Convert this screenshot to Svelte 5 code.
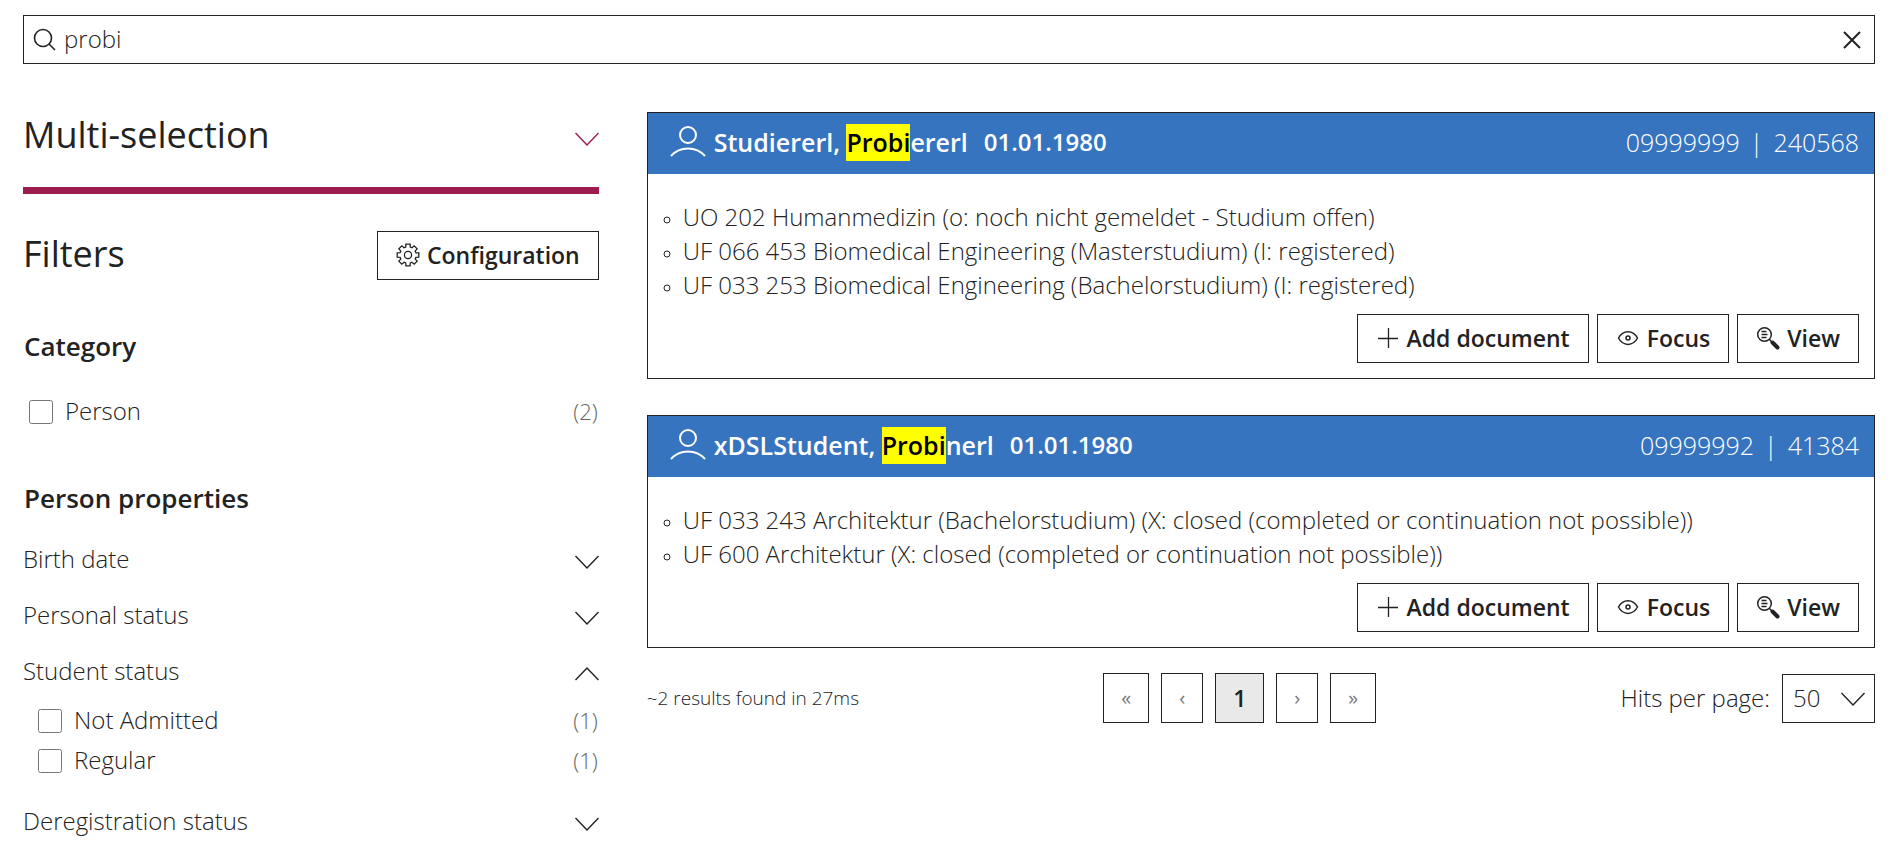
<script lang="ts">
	let query = 'probi';
	let hitsPerPage = 50;
	let personChecked = false;

	let facets = [
		{ label: 'Birth date', open: false, values: [] },
		{ label: 'Personal status', open: false, values: [] },
		{
			label: 'Student status',
			open: true,
			values: [
				{ label: 'Not Admitted', count: 1, checked: false },
				{ label: 'Regular', count: 1, checked: false }
			]
		},
		{ label: 'Deregistration status', open: false, values: [] }
	];

	const hits = [
		{
			familyName: 'Studiererl',
			match: 'Probi',
			rest: 'ererl',
			birthDate: '01.01.1980',
			ids: ['09999999', '240568'],
			studies: [
				'UO 202 Humanmedizin (o: noch nicht gemeldet - Studium offen)',
				'UF 066 453 Biomedical Engineering (Masterstudium) (I: registered)',
				'UF 033 253 Biomedical Engineering (Bachelorstudium) (I: registered)'
			]
		},
		{
			familyName: 'xDSLStudent',
			match: 'Probi',
			rest: 'nerl',
			birthDate: '01.01.1980',
			ids: ['09999992', '41384'],
			studies: [
				'UF 033 243 Architektur (Bachelorstudium) (X: closed (completed or continuation not possible))',
				'UF 600 Architektur (X: closed (completed or continuation not possible))'
			]
		}
	];

	// outline of the gear: [degrees from the tooth's middle, radius] for each corner
	const corners = [[-16, 8.2], [-11, 11], [11, 11], [16, 8.2]];
	const gear = [0, 45, 90, 135, 180, 225, 270, 315].flatMap((tooth) =>
		corners.map(([offset, radius]) => {
			const angle = ((tooth + offset) * Math.PI) / 180;
			return `${(12 + radius * Math.cos(angle)).toFixed(2)},${(12 + radius * Math.sin(angle)).toFixed(2)}`;
		})
	).join(' ');
</script>

<div class="search">
	<form class="search-box" on:submit|preventDefault>
		<svg class="search-icon" viewBox="0 0 24 24" aria-hidden="true">
			<circle cx="10" cy="10" r="8.5" />
			<path d="M16 16 L22 22" />
		</svg>
		<input type="text" aria-label="Search" bind:value={query} />
		<button type="reset" class="clear" aria-label="Clear" on:click={() => (query = '')}>
			<svg viewBox="0 0 18 18" aria-hidden="true"><path d="M1 1 L17 17 M17 1 L1 17" /></svg>
		</button>
	</form>

	<div class="columns">
		<aside>
			<div class="multi-selection">
				<h2>Multi-selection</h2>
				<button class="toggle accent" aria-label="Toggle multi-selection">
					<svg class="chevron" viewBox="0 0 24 14"><path d="M0.5 1 L12 13 L23.5 1" /></svg>
				</button>
			</div>

			<div class="filters-head">
				<h2>Filters</h2>
				<button class="button">
					<svg class="icon" viewBox="0 0 24 24" aria-hidden="true">
						<polygon points={gear} />
						<circle cx="12" cy="12" r="3.6" />
					</svg>
					Configuration
				</button>
			</div>

			<h3>Category</h3>
			<label class="option">
				<input type="checkbox" bind:checked={personChecked} />
				<span>Person</span>
				<span class="count">(2)</span>
			</label>

			<h3 class="properties">Person properties</h3>
			{#each facets as facet}
				<button class="facet" aria-expanded={facet.open} on:click={() => (facet.open = !facet.open)}>
					{facet.label}
					<svg class="chevron" class:up={facet.open} viewBox="0 0 24 14" aria-hidden="true">
						<path d="M0.5 1 L12 13 L23.5 1" />
					</svg>
				</button>
				{#if facet.open}
					<div class="facet-values">
						{#each facet.values as value}
							<label class="option">
								<input type="checkbox" bind:checked={value.checked} />
								<span>{value.label}</span>
								<span class="count">({value.count})</span>
							</label>
						{/each}
					</div>
				{/if}
			{/each}
		</aside>

		<main>
			{#each hits as hit}
				<article>
					<header>
						<svg class="person" viewBox="0 0 36 32" aria-hidden="true">
							<circle cx="18" cy="9" r="8" />
							<path d="M1 30 C10 20 26 20 35 30" />
						</svg>
						<span class="name">{hit.familyName}, <mark>{hit.match}</mark>{hit.rest}</span>
						<span class="birth-date">{hit.birthDate}</span>
						<span class="ids">
							<span>{hit.ids[0]}</span>
							<span>|</span>
							<span>{hit.ids[1]}</span>
						</span>
					</header>
					<ul>
						{#each hit.studies as study}
							<li>{study}</li>
						{/each}
					</ul>
					<div class="actions">
						<button class="button">
							<svg class="icon" viewBox="0 0 24 24" aria-hidden="true">
								<path d="M12.5 2 V22 M2 12.5 H22" />
							</svg>
							Add document
						</button>
						<button class="button">
							<svg class="icon eye" viewBox="0 0 24 24" aria-hidden="true">
								<path d="M2.5 12 C7 3.5 17 3.5 21.5 12 C17 20.5 7 20.5 2.5 12 Z" />
								<circle cx="12" cy="12" r="2" />
							</svg>
							Focus
						</button>
						<button class="button">
							<svg class="icon view" viewBox="0 0 24 24" aria-hidden="true">
								<circle cx="8.5" cy="8.5" r="6.8" />
								<path d="M5.5 5.5 H10.5 M5.5 8.5 H11.5 M5.5 11.5 H10.5 M13.5 13.5 L16 16" />
								<path class="handle" d="M16.5 16.5 L21.5 21.5" />
							</svg>
							View
						</button>
					</div>
				</article>
			{/each}

			<footer>
				<span class="stats">~2 results found in 27ms</span>
				<nav aria-label="Pages">
					<button class="page" disabled>«</button>
					<button class="page" disabled>‹</button>
					<button class="page current">1</button>
					<button class="page" disabled>›</button>
					<button class="page" disabled>»</button>
				</nav>
				<label class="per-page">
					Hits per page:
					<span class="select">
						<select bind:value={hitsPerPage}>
							<option value={25}>25</option>
							<option value={50}>50</option>
							<option value={100}>100</option>
						</select>
						<svg class="chevron" viewBox="0 0 24 14" aria-hidden="true">
							<path d="M0.5 1 L12 13 L23.5 1" />
						</svg>
					</span>
				</label>
			</footer>
		</main>
	</div>
</div>

<style>
	:global(body) {
		margin: 0;
		background: #fff;
	}
	.search {
		padding: 15px 22px 0 23px;
		font: 300 24px/34px 'Open Sans', sans-serif;
		color: #222;
	}
	button, input, select {
		font: inherit;
		color: inherit;
	}
	button {
		cursor: pointer;
	}
	svg {
		flex: none;
		fill: none;
		stroke: currentColor;
	}

	/* Search box */
	.search-box {
		display: flex;
		align-items: center;
		box-sizing: border-box;
		height: 49px;
		padding: 0 11px 0 9px;
		border: 1px solid #222;
	}
	.search-box input {
		flex: 1;
		min-width: 0;
		padding: 0 0 2px 7px;
		border: none;
		outline: none;
		background: none;
	}
	.search-icon {
		width: 24px;
		height: 24px;
		stroke-width: 1.6;
	}
	.clear {
		display: flex;
		padding: 2px;
		border: none;
		background: none;
	}
	.clear svg {
		width: 18px;
		height: 18px;
		stroke-width: 2;
	}

	.columns {
		display: grid;
		grid-template-columns: minmax(0, 15fr) minmax(0, 32fr);
		gap: 48px;
		align-items: start;
		padding-top: 48px;
	}

	/* Filters */
	h2, h3 {
		margin: 0;
	}
	h2 {
		font-size: 36px;
		line-height: 46px;
		font-weight: 400;
	}
	h3 {
		padding: 0 1px;
		font-size: 26px;
		line-height: 36px;
		font-weight: 600;
	}
	.multi-selection {
		display: flex;
		align-items: center;
		justify-content: space-between;
		padding-bottom: 29px;
		border-bottom: 7px solid #9c1c4d;
	}
	.toggle {
		display: flex;
		padding: 8px 0 0;
		border: none;
		background: none;
	}
	.accent {
		color: #9c1c4d;
	}
	.chevron {
		width: 24px;
		height: 14px;
		stroke-width: 1.4;
	}
	.up {
		transform: rotate(180deg);
	}
	.filters-head {
		display: flex;
		align-items: flex-start;
		justify-content: space-between;
		padding: 37px 0 48px;
	}
	.option {
		display: flex;
		align-items: center;
		padding-left: 6px;
		line-height: 38px;
	}
	.option input {
		flex: none;
		width: 24px;
		height: 24px;
		margin: 0 12px 0 0;
	}
	.option span {
		padding-bottom: 2px;
	}
	.option .count {
		margin-left: auto;
		padding-right: 1px;
		font-size: 22px;
		color: #666;
	}
	h3 + .option {
		padding-top: 28px;
	}
	.properties {
		padding-top: 48px;
		padding-bottom: 17px;
	}
	.facet {
		display: flex;
		align-items: center;
		justify-content: space-between;
		box-sizing: border-box;
		width: 100%;
		height: 56px;
		padding: 0 0 4px;
		border: none;
		background: none;
		text-align: left;
	}
	.facet .chevron {
		margin-top: 5px;
	}
	.facet-values {
		padding: 0 0 14px 9px;
	}

	.button {
		display: flex;
		align-items: center;
		gap: 7px;
		box-sizing: border-box;
		height: 49px;
		padding: 0 18px 2px;
		border: 1px solid #222;
		background: #fff;
		font-size: 23px;
		font-weight: 600;
	}
	.icon {
		width: 24px;
		height: 24px;
		stroke-width: 1.3;
	}
	.eye, .view {
		stroke-width: 1.5;
	}
	.handle {
		stroke-width: 4;
		stroke-linecap: round;
	}

	/* Hits */
	article {
		margin-bottom: 36px;
		border: 1px solid #222;
	}
	article:last-of-type {
		margin-bottom: 25px;
	}
	header {
		display: flex;
		align-items: center;
		box-sizing: border-box;
		height: 61px;
		padding: 0 15px 3px 22px;
		background: #3774c0;
		color: #fff;
	}
	.person {
		width: 36px;
		height: 32px;
		margin-right: 8px;
		stroke-width: 2;
	}
	.name {
		font-size: 25px;
		font-weight: 600;
	}
	mark {
		padding: 1px 0 2px;
		background: #ff0;
		color: #000;
	}
	.birth-date {
		margin-left: 16px;
		font-weight: 600;
	}
	.ids {
		display: flex;
		gap: 10px;
		margin-left: auto;
		font-size: 25px;
	}
	ul {
		margin: 0;
		padding: 26px 15px 12px 35px;
		list-style: circle;
	}
	li::marker {
		font-size: 18px;
	}
	.actions {
		display: flex;
		justify-content: flex-end;
		gap: 8px;
		padding: 0 15px 15px;
	}

	/* Pagination */
	footer {
		display: flex;
		align-items: center;
		justify-content: space-between;
	}
	.stats {
		font-size: 19px;
	}
	nav {
		display: flex;
		gap: 12px;
	}
	.page {
		height: 50px;
		padding: 0 17px;
		border: 1px solid #222;
		background: #fff;
	}
	.page:disabled {
		color: #777;
		font-size: 20px;
		font-weight: 400;
		cursor: default;
	}
	.current {
		background: #e9e9e9;
		font-size: 23px;
		font-weight: 600;
	}
	.per-page {
		display: flex;
		align-items: center;
		gap: 12px;
	}
	.select {
		position: relative;
		display: flex;
	}
	select {
		appearance: none;
		height: 49px;
		padding: 0 39px 0 10px;
		border: 1px solid #222;
		border-radius: 0;
		background: #fff;
	}
	.select .chevron {
		position: absolute;
		right: 10px;
		top: 18px;
		pointer-events: none;
	}
</style>
